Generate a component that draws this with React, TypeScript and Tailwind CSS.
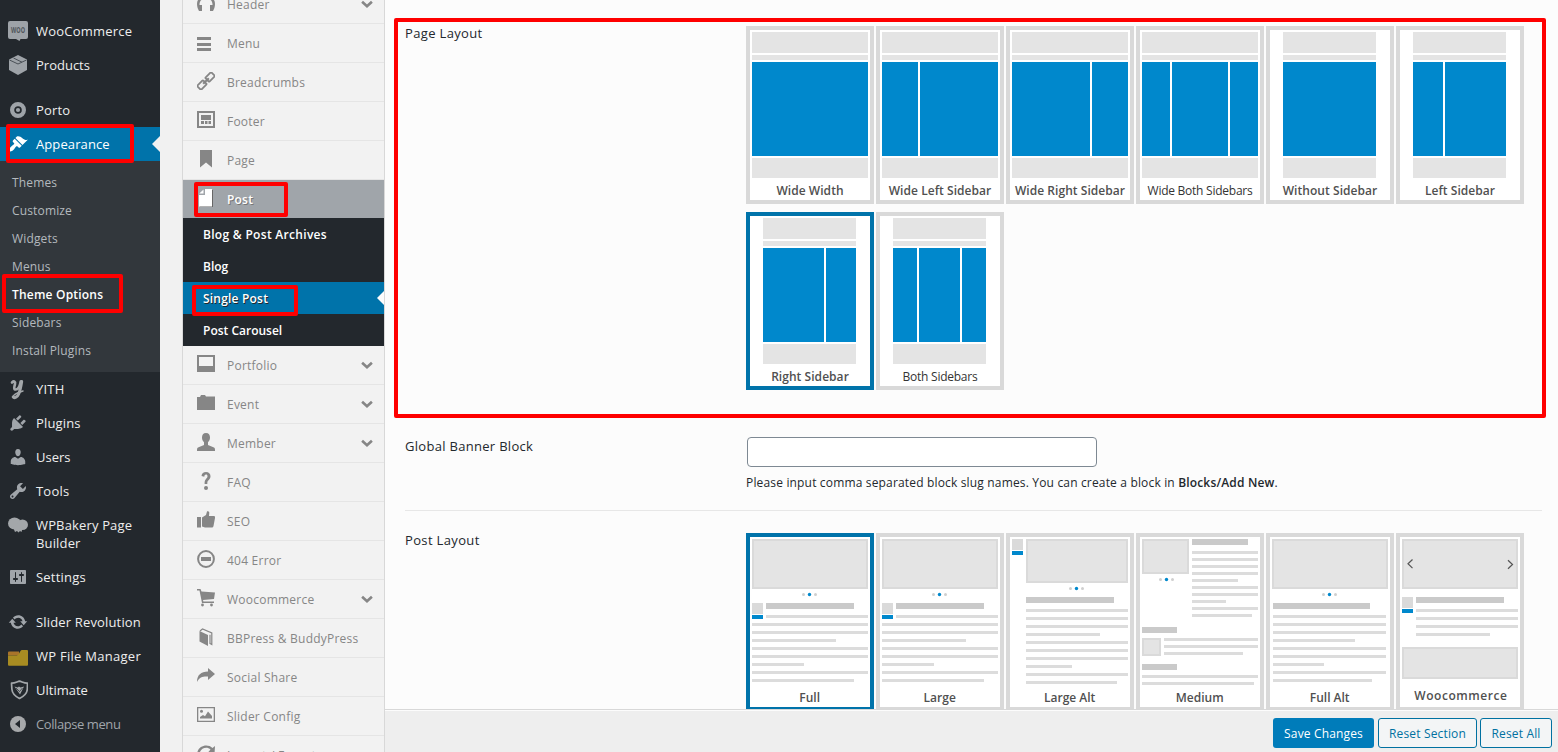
import type { ReactNode } from "react";
import clsx from "clsx";

type MenuItem = {
  label: string;
  icon: ReactNode;
  current?: boolean;
  tall?: boolean;
  gap?: boolean;
  muted?: boolean;
  tracking?: string;
};

type SectionItem = {
  label: string;
  icon: ReactNode;
  arrow?: boolean;
};

// [x, y, width, height]
type Box = [number, number, number, number];

type PostThumb = {
  label: string;
  labelX?: number;
  labelY?: number;
  labelClass?: string;
  images: Box[];
  titles: Box[];
  lines: [number, number, number][];
  avatar?: [number, number];
  dots?: [number, number];
  arrows?: boolean;
  selected?: boolean;
};

const Dash = ({ d }: { d: string }) => (
  <svg width="20" height="20" viewBox="0 0 20 20" fill="currentColor"><path fillRule="evenodd" d={d} /></svg>
);

const El = ({ children }: { children: ReactNode }) => (
  <svg width="18" height="18" viewBox="0 0 18 18" fill="currentColor">{children}</svg>
);

const WooIcon = () => (
  <svg width="20" height="20" viewBox="0 0 20 20">
    <path fill="#9ea3a8" d="M2 0h16a2 2 0 0 1 2 2v14a2 2 0 0 1-2 2h-5.500l-1 2-3.500-2H2a2 2 0 0 1-2-2V2a2 2 0 0 1 2-2z" />
    <text x="10" y="12" textAnchor="middle" fontSize="8" fontWeight="700" fill="#50565c" fontFamily="Open Sans, sans-serif" textLength="14" lengthAdjust="spacingAndGlyphs">WOO</text>
  </svg>
);

const ProductIcon = () => (
  <svg width="20" height="20" viewBox="0 0 20 20">
    <path fill="#9ea3a8" d="M10 0l9 4.500v10.500l-9 5-9-5V4.500z" />
    <path fill="none" stroke="#4a5056" strokeWidth="1" d="M1.500 5l8.500 4 8.500-4M5.500 3l8.500 4.200" />
  </svg>
);

const PortoIcon = () => (
  <svg width="20" height="20" viewBox="0 0 20 20">
    <circle cx="10" cy="10" r="5.900" fill="none" stroke="#9ea3a8" strokeWidth="4.200" />
    <circle cx="10" cy="10" r="2.100" fill="#9ea3a8" />
  </svg>
);

const YithIcon = () => (
  <svg width="20" height="22" viewBox="0 0 20 22" fill="none" stroke="#a3a7aa" strokeLinecap="round">
    <path strokeWidth="2.600" d="M4 3.500c2-2 3.700-1 3 1.500-.8 3-1.500 5.500.8 5.500 2.500 0 4.200-4 4.900-8" />
    <path strokeWidth="3" d="M13.700 2.500c-.8 5-1.500 9-3 12.500-1.200 3-4.500 4.500-5.500 3" />
    <path strokeWidth="1.500" d="M5 18c0-2.500 5-4.500 10-6" />
  </svg>
);

const BakeryIcon = () => (
  <svg width="20" height="20" viewBox="0 0 20 20" fill="#a3a7aa">
    <ellipse cx="6.500" cy="8.500" rx="6.500" ry="6" />
    <ellipse cx="14.500" cy="9.800" rx="5.500" ry="5.200" />
    <path d="M5 12h10l-1.500 5-1.500-1-1.500 1.500-1.500-1.500-2 1z" />
  </svg>
);

const FolderIcon = () => (
  <svg width="20" height="20" viewBox="0 0 20 20">
    <path fill="#a9742a" d="M1 5.500h10v4H0v-3a1 1 0 0 1 1-1z" />
    <path fill="#a88c22" d="M0 9.500h8c1.500 0 2-.5 3-2l1.500-2.500c.5-.7 1-1 2-1H19a1 1 0 0 1 1 1v13.700a1 1 0 0 1-1 1H1a1 1 0 0 1-1-1z" />
  </svg>
);

const ShieldIcon = () => (
  <svg width="20" height="20" viewBox="0 0 20 20">
    <path fill="none" stroke="#a3a7aa" strokeWidth="1.700" strokeLinejoin="round" d="M4 3.200c3 .3 6-1.700 8-2 2 .3 5 2.300 8 2l-.2 6c-.3 4.500-4 7.300-7.800 9.300-3.800-2-7.300-4.800-7.600-9.300z" transform="translate(-.5 0)" />
    <path fill="#a3a7aa" d="M6.500 6.500l3 1 1.500-1 1.500 1 3.500-1-4 8z" />
    <path stroke="#23282d" fill="none" strokeWidth=".7" d="M8 8l3.500 3.500 3-3.500" />
  </svg>
);

const CollapseIcon = () => (
  <svg width="20" height="20" viewBox="0 0 20 20">
    <circle cx="10" cy="10" r="8" fill="#a7a9ab" />
    <path fill="#23282d" d="M12 6v8l-5-4z" />
  </svg>
);

const appearancePath = "M14.48 11.06L7.41 3.99l1.5-1.5c.5-.56 2.3-.47 3.51.32 1.21.8 1.43 1.28 2.91 2.1 1.18.64 2.45 1.26 4.45.85zm-.71.71L6.7 4.7 4.93 6.47c-.39.39-.39 1.02 0 1.41l1.06 1.06c.39.39.39 1.03 0 1.42-.6.6-1.43 1.11-2.21 1.69-.35.26-.7.53-1.01.84C1.43 14.23.4 16.08 1.4 17.07c.99 1 2.84-.03 4.18-1.36.31-.31.58-.66.85-1.02.57-.78 1.08-1.61 1.69-2.21.39-.39 1.02-.39 1.41 0l1.06 1.06c.39.39 1.02.39 1.41 0z";
const pluginsPath = "M13.11 4.36L9.87 7.6 8 5.73l3.24-3.24c.35-.34 1.05-.2 1.56.32.52.51.66 1.21.31 1.55zm-8 1.77l.91-1.12 9.01 9.01-1.19.84c-.71.71-2.63 1.16-3.82 1.16H6.14L4.9 17.26c-.59.59-1.54.59-2.12 0-.59-.58-.59-1.53 0-2.12l1.24-1.24v-3.88c0-1.13.4-3.19 1.09-3.89zm7.26 3.97l3.24-3.24c.34-.35 1.04-.21 1.55.31.52.51.66 1.21.31 1.55l-3.24 3.25z";
const usersPath = "M10 9.25c-2.27 0-2.73-3.44-2.73-3.44C7 4.02 7.82 2 9.97 2c2.16 0 2.98 2.02 2.71 3.81 0 0-.41 3.44-2.68 3.44zm0 2.57L12.72 10c2.39 0 4.52 2.33 4.52 4.53v2.49s-3.65 1.13-7.24 1.13c-3.65 0-7.24-1.13-7.24-1.13v-2.49c0-2.25 1.94-4.48 4.47-4.48z";
const toolsPath = "M16.68 9.77c-1.34 1.34-3.3 1.67-4.95.99l-5.41 6.52c-.99.99-2.59.99-3.58 0s-.99-2.59 0-3.57l6.52-5.42c-.68-1.65-.35-3.61.99-4.95 1.28-1.28 3.12-1.62 4.72-1.06l-2.89 2.89 2.82 2.82 2.86-2.87c.53 1.58.18 3.39-1.08 4.65zM3.81 16.21c.4.39 1.04.39 1.43 0 .4-.4.4-1.04 0-1.43-.39-.4-1.03-.4-1.43 0-.39.39-.39 1.03 0 1.43z";
const settingsPath = "M18 16V4c0-.55-.45-1-1-1H3c-.55 0-1 .45-1 1v12c0 .55.45 1 1 1h14c.55 0 1-.45 1-1zM8 11h1c.55 0 1 .45 1 1s-.45 1-1 1H8v1.5c0 .28-.22.5-.5.5s-.5-.22-.5-.5V13H6c-.55 0-1-.45-1-1s.45-1 1-1h1V5.500c0-.28.22-.5.5-.5s.5.22.5.5V11zm5-2h-1c-.55 0-1-.45-1-1s.45-1 1-1h1V5.500c0-.28.22-.5.5-.5s.5.22.5.5V7h1c.55 0 1 .45 1 1s-.45 1-1 1h-1v5.500c0 .28-.22.5-.5.5s-.5-.22-.5-.5V9z";
const updatePath = "M10.2 3.28c3.53 0 6.43 2.61 6.92 6h2.08l-3.5 4-3.5-4h2.32c-.45-1.97-2.21-3.45-4.32-3.45-1.45 0-2.73.71-3.54 1.78L4.95 5.66C6.23 4.2 8.11 3.28 10.2 3.28zm-.4 13.44c-3.52 0-6.43-2.61-6.92-6H.8l3.5-4c1.17 1.33 2.33 2.67 3.5 4H5.480c.45 1.97 2.21 3.45 4.32 3.45 1.45 0 2.73-.71 3.54-1.78l1.71 1.95c-1.28 1.46-3.15 2.38-5.25 2.38z";

const topMenu: MenuItem[] = [
  { label: "WooCommerce", icon: <WooIcon />, tracking: "tracking-[0.22px]" },
  { label: "Products", icon: <ProductIcon /> },
  { label: "Porto", icon: <PortoIcon />, gap: true, tracking: "tracking-[0.15px]" },
  { label: "Appearance", icon: <Dash d={appearancePath} />, current: true, tracking: "tracking-[0.1px]" },
];

const subMenu = ["Themes", "Customize", "Widgets", "Menus", "Theme Options", "Sidebars", "Install Plugins"];

const bottomMenu: MenuItem[] = [
  { label: "YITH", icon: <YithIcon />, tracking: "tracking-[0.2px]" },
  { label: "Plugins", icon: <Dash d={pluginsPath} />, tracking: "tracking-[0.15px]" },
  { label: "Users", icon: <Dash d={usersPath} /> },
  { label: "Tools", icon: <Dash d={toolsPath} />, tracking: "tracking-[0.2px]" },
  { label: "WPBakery Page Builder", icon: <BakeryIcon />, tall: true, tracking: "tracking-[0.15px]" },
  { label: "Settings", icon: <Dash d={settingsPath} />, tracking: "tracking-[0.2px]" },
  { label: "Slider Revolution", icon: <Dash d={updatePath} />, gap: true, tracking: "tracking-[0.16px]" },
  { label: "WP File Manager", icon: <FolderIcon />, tracking: "tracking-[0.27px]" },
  { label: "Ultimate", icon: <ShieldIcon /> },
  { label: "Collapse menu", icon: <CollapseIcon />, muted: true, tracking: "tracking-[-0.42px]" },
];

const sectionsBefore: SectionItem[] = [
  { label: "Header", arrow: true, icon: <El><path d="M0 10C0-1 18-1 18 10c0 3-1 5-2 7h-3V11h2.500C16 2 2 2 2.500 11H5v6H2c-1-2-2-4-2-7z" /></El> },
  { label: "Menu", icon: <El><path d="M0 4h14v3H0zM0 10h14v3H0zM0 15h14v3H0z" /></El> },
  { label: "Breadcrumbs", icon: <El><g transform="rotate(-45 9 9)" fill="none" stroke="currentColor" strokeWidth="1.800"><rect x="-.9" y="6.200" width="8.300" height="5.600" rx=".8" /><rect x="10.600" y="6.200" width="8.300" height="5.600" rx=".8" /><path strokeWidth="2.200" d="M5 9h8" /></g></El> },
  { label: "Footer", icon: <El><path fillRule="evenodd" d="M0 0h18v17H0zM2 2v13h14V2z" /><path d="M4 4h10v5H4zM4 10h3v3H4zM8 10h2.500v3H8zM11.500 10H14v3h-2.500z" /></El> },
  { label: "Page", icon: <El><path d="M3 0h12v17.500l-6-5-6 5z" /></El> },
];

const sectionsAfter: SectionItem[] = [
  { label: "Portfolio", arrow: true, icon: <El><path fillRule="evenodd" d="M0 0h18v17H0zM2 2v9h14V2z" /></El> },
  { label: "Event", arrow: true, icon: <El><path d="M0 3h3l1-2h4l1 1.500h9V16H0z" /></El> },
  { label: "Member", arrow: true, icon: <El><path d="M9 0c2.800 0 4 2 4 4.500 0 2-.8 3.500-2 4.700V12l6 2.500c1 .5 1 1.500 1 3.500H0c0-2 0-3 1-3.500L7 12V9.200C5.800 8 5 6.500 5 4.500 5 2 6.200 0 9 0z" /></El> },
  { label: "FAQ", icon: <El><path d="M4.500 4C4.700 1.500 6.500 0 9 0c2.800 0 4.500 1.700 4.500 4.200 0 2.200-1.200 3.300-2.200 4.300-.8.800-1 1.500-1 3.500H7.600c0-2.500.2-3.600 1.400-5 .8-1 1.500-1.500 1.500-2.800 0-1-.6-1.700-1.500-1.700-1.100 0-1.500.7-1.700 2.200z" /><circle cx="9" cy="16" r="2" /></El> },
  { label: "SEO", icon: <El><path d="M0 6h4v10.500H0zM5 6.500L9 4l1-3.500C10.500 0 12 .5 12.300 1.500L12 5h5c1 0 1.200 1 1 2l-1.500 8c-.3 1-.8 1.500-2 1.500H8L5 15.500z" /></El> },
  { label: "404 Error", icon: <El><circle cx="9" cy="9" r="7.900" fill="none" stroke="currentColor" strokeWidth="2" /><path d="M4 7h10v4H4z" /></El> },
  { label: "Woocommerce", arrow: true, icon: <El><path d="M0 0h3.500l1 2.500L18 3.500 17 10l-11 1 .4 1.500H17V14H5L2.500 1.500H0z" /><circle cx="5.500" cy="16" r="1.400" /><circle cx="14.500" cy="16" r="1.400" /></El> },
  { label: "BBPress & BuddyPress", icon: <El><path d="M2.500 3l8.500 4v11l-8.500-4.500z" /><path fill="none" stroke="currentColor" strokeWidth="1.200" d="M3 3l2.500-2L14.800 5v11.500L13 15.500M13 16V6.800" /></El> },
  { label: "Social Share", icon: <El><path d="M0 15C0 8 4 4.500 11 4.500V1l7 6-7 6V9.500C6 9.200 2.500 10 0 15z" /></El> },
  { label: "Slider Config", icon: <El><path fillRule="evenodd" d="M0 1h18v15H0zM1.300 2.300v12.400h15.400V2.300z" /><circle cx="4.500" cy="5.200" r="1.500" /><path d="M3 12.500V11l3-2 2 1.200L11 5.500l4 4.500v2.500z" /></El> },
  { label: "Import / Export", icon: <El><path d="M17.500 9L18 1l-2.500 2C11-1.500 1 0 0 9c0 5 4 9 9 9v-2.500C5 15.500 2.500 12.500 2.500 9c.5-6 7.500-8 11-4.500L11 7.500z" /></El> },
];

const pageLayouts = [
  { label: "Wide Width", wide: true, cols: [116] },
  { label: "Wide Left Sidebar", wide: true, cols: [36, 78] },
  { label: "Wide Right Sidebar", wide: true, cols: [78, 36] },
  { label: "Wide Both Sidebars", wide: true, cols: [28, 56, 28], light: true },
  { label: "Without Sidebar", cols: [93] },
  { label: "Left Sidebar", cols: [30, 61] },
  { label: "Right Sidebar", cols: [61, 30], selected: true },
  { label: "Both Sidebars", cols: [24, 41, 24], light: true },
];

const fullLines: [number, number, number][] = [
  [16, 78, 102], [2, 86, 116], [2, 94, 116], [2, 102, 84], [2, 110, 116],
  [2, 118, 116], [2, 126, 52], [2, 134, 116], [2, 142, 102],
];

const postLayouts: PostThumb[] = [
  { label: "Full", selected: true, images: [[2, 2, 116, 50]], dots: [59.5, 57.5], avatar: [2, 66], titles: [[16, 66, 88, 6]], lines: fullLines },
  { label: "Large", images: [[2, 2, 116, 50]], dots: [59.5, 57.5], avatar: [2, 66], titles: [[16, 66, 88, 6]], lines: fullLines },
  {
    label: "Large Alt", images: [[16, 2, 102, 44]], dots: [66.5, 51.5], avatar: [2, 2], titles: [[16, 60, 88, 6]],
    lines: [[16, 72, 102], [16, 80, 102], [16, 88, 102], [16, 96, 74], [16, 104, 102], [16, 112, 102], [16, 120, 102], [16, 128, 46], [16, 136, 102], [16, 144, 91]],
  },
  {
    label: "Medium", images: [[2, 2, 47, 35], [2, 101, 19, 18]], dots: [26.5, 42.5],
    titles: [[52, 2, 56, 6], [2, 90, 35, 6], [2, 127, 35, 6]],
    lines: [[52, 14, 66], [52, 21, 66], [52, 28, 66], [52, 35, 66], [52, 42, 46], [52, 49, 66], [52, 56, 66], [52, 63, 34], [52, 70, 66], [52, 77, 60], [24, 101, 94], [24, 108, 94], [24, 115, 79], [2, 138, 116], [2, 145, 112]],
  },
  {
    label: "Full Alt", images: [[2, 2, 116, 50]], dots: [59.5, 57.5], titles: [[3, 66, 97, 6]],
    lines: [[3, 78, 113], [3, 86, 113], [3, 94, 113], [3, 102, 82], [3, 110, 113], [3, 118, 113], [3, 126, 51], [3, 134, 113], [3, 142, 99]],
  },
  {
    label: "Woocommerce", labelX: 60.9, labelY: 163, labelClass: "tracking-[0.55px]", arrows: true,
    images: [[2, 2, 116, 50], [2, 110, 116, 32]], avatar: [2, 60], titles: [[16, 60, 88, 6]],
    lines: [[16, 72, 102], [16, 80, 102], [16, 88, 102], [16, 96, 74]],
  },
];

function AdminItem({ item }: { item: MenuItem }) {
  return (
    <li
      className={clsx(
        "relative flex pl-2 pt-[7px]",
        item.tall ? "h-[52px]" : "h-[34px]",
        item.gap && "mt-[11px]",
        item.current ? "bg-[#0073aa] text-white" : item.muted ? "text-[#a0a5aa]" : "text-[#eee]",
      )}
    >
      <span className={clsx("w-5 shrink-0", !item.current && "text-[#a0a5aa]")}>{item.icon}</span>
      <span className={clsx("ml-2 w-[112px] pt-px leading-[18px]", item.tracking)}>{item.label}</span>
      {item.current && (
        <svg className="absolute right-0 top-[9px]" width="8" height="16" viewBox="0 0 8 16"><path fill="#f1f1f1" d="M8 0v16L0 8z" /></svg>
      )}
    </li>
  );
}

function SectionRow({ item }: { item: SectionItem }) {
  return (
    <li className="flex h-[39px] shrink-0 border-b border-[#e5e5e5] pl-3.5 pr-[11px] pt-[9px] text-[#868686]">
      <span className="h-[18px] w-[18px]">{item.icon}</span>
      <span className="ml-3 whitespace-nowrap leading-[21px] tracking-[0.23px]">{item.label}</span>
      {item.arrow && (
        <svg className="ml-auto mt-[6px]" width="12" height="9" viewBox="0 0 12 9"><path fill="none" stroke="currentColor" strokeWidth="2.600" d="M1.100 1.700L6 6.300l4.900-4.600" /></svg>
      )}
    </li>
  );
}

function PageThumb({ layout }: { layout: (typeof pageLayouts)[number] }) {
  const { label, wide, cols, light, selected } = layout;
  return (
    <div className={clsx("h-[178px] w-[128px] border-4 bg-white pt-0.5", selected ? "border-[#0073aa]" : "border-[#d9d9d9]")}>
      <div className={clsx("flex flex-col gap-0.5", wide ? "mx-0.5" : "ml-[13px] w-[93px]")}>
        <div className="h-[21px] bg-[#e4e4e4]" />
        <div className="h-[5px] bg-[#e4e4e4]" />
        <div className="flex h-[94px] gap-0.5">
          {cols.map((w, i) => <div key={i} className="bg-[#0088cc]" style={{ width: w }} />)}
        </div>
        <div className="h-5 bg-[#e4e4e4]" />
      </div>
      <p className={clsx("mt-1 whitespace-nowrap text-center text-[12px] leading-[18px]", light ? "tracking-[-0.25px] font-medium text-[#333]" : "font-semibold tracking-[0.05px] text-[#505050]")}>{label}</p>
    </div>
  );
}

function PostThumbCard({ thumb }: { thumb: PostThumb }) {
  const { avatar, dots } = thumb;
  return (
    <div className={clsx("h-[178px] w-[128px] border-4 bg-white", thumb.selected ? "border-[#0073aa]" : "border-[#d9d9d9]")}>
      <svg width="120" height="170" viewBox="0 0 120 170">
        {thumb.images.map(([x, y, w, h], i) => (
          <rect key={i} x={x + 1} y={y + 1} width={w - 2} height={h - 2} fill="#e4e4e4" stroke="#dadada" strokeWidth="2" />
        ))}
        {thumb.titles.map(([x, y, w, h], i) => <rect key={i} x={x} y={y} width={w} height={h} fill="#cacaca" />)}
        {thumb.lines.map(([x, y, w], i) => <rect key={i} x={x} y={y} width={w} height="3" fill="#dcdcdc" />)}
        {avatar && (
          <>
            <rect x={avatar[0]} y={avatar[1]} width="11" height="11" fill="#dadada" />
            <rect x={avatar[0]} y={avatar[1] + 12} width="11" height="4" fill="#0088cc" />
          </>
        )}
        {dots && (
          <>
            <circle cx={dots[0] - 6} cy={dots[1]} r="1.500" fill="#cfcfcf" />
            <circle cx={dots[0]} cy={dots[1]} r="1.700" fill="#0088cc" />
            <circle cx={dots[0] + 6} cy={dots[1]} r="1.500" fill="#cfcfcf" />
          </>
        )}
        {thumb.arrows && <path fill="none" stroke="#555" strokeWidth="1.200" d="M12.500 22.500l-4.500 4.300 4.500 4.300M108 23.200l4.500 4.300-4.500 4.300" />}
        <text x={thumb.labelX ?? 59.7} y={thumb.labelY ?? 164.5} textAnchor="middle" fontSize="12" fontWeight="600" fill="#505050" className={thumb.labelClass}>{thumb.label}</text>
      </svg>
    </div>
  );
}

// red highlight drawn over the page
const Mark = ({ className }: { className: string }) => (
  <div className={clsx("pointer-events-none absolute rounded-[2px] border-4 border-[#f00]", className)} />
);

export default function App() {
  return (
    <div className="relative flex h-[752px] w-[1558px] overflow-hidden bg-[#f1f1f1] font-['Open_Sans','Noto_Sans',sans-serif] text-[13px]">
      <nav className="w-40 shrink-0 bg-[#23282d] pt-3.5">
        <ul>{topMenu.map((item) => <AdminItem key={item.label} item={item} />)}</ul>
        <ul className="h-[211px] bg-[#32373c] pt-2 text-[12px] tracking-[0.15px] text-[#b4b9be]">
          {subMenu.map((label) => (
            <li key={label} className={clsx("h-7 pl-3 leading-7", label === "Theme Options" && "font-semibold tracking-[0.2px] text-white")}>{label}</li>
          ))}
        </ul>
        <ul>{bottomMenu.map((item) => <AdminItem key={item.label} item={item} />)}</ul>
      </nav>

      <aside className="ml-[22px] flex w-[203px] shrink-0 flex-col overflow-hidden border-x border-[#d8d8d8] bg-[#f2f2f2] text-[12px] font-medium">
        <ul className="-mt-[15px] flex flex-col">
          {sectionsBefore.map((item) => <SectionRow key={item.label} item={item} />)}
        </ul>
        <div className="flex h-[38px] shrink-0 bg-[#a0a5aa] pl-3.5 pt-[9px] font-semibold text-white [text-shadow:1px_1px_#777]">
          <svg width="18" height="18" viewBox="0 0 18 18"><path fill="#666" d="M3 17h12V1h1v17.500H3z" /><path fill="#fff" d="M8 0h7v17.500H2V6h6z" /><path fill="#fff" d="M6.500.500V4.500H2.300z" /></svg>
          <span className="ml-3 leading-[21px] tracking-[0.2px]">Post</span>
        </div>
        <ul className="shrink-0 bg-[#23282d] font-semibold text-white">
          {["Blog & Post Archives", "Blog", "Single Post", "Post Carousel"].map((label) => (
            <li
              key={label}
              className={clsx(
                "relative h-8 pl-5 pt-px leading-8",
                label === "Single Post" && "bg-[#0073aa] tracking-[0.2px] [text-shadow:1px_1px_#23282d]",
                label === "Blog & Post Archives" && "tracking-[0.3px]",
              )}
            >
              {label}
              {label === "Single Post" && (
                <svg className="absolute right-0 top-[9px]" width="7" height="14" viewBox="0 0 7 14"><path fill="#fcfcfc" d="M7 0v14L0 7z" /></svg>
              )}
            </li>
          ))}
        </ul>
        <ul className="flex flex-col">
          {sectionsAfter.map((item) => <SectionRow key={item.label} item={item} />)}
        </ul>
      </aside>

      <main className="flex min-w-0 flex-1 flex-col bg-[#fcfcfc] text-[#23282d]">
        <div className="h-[709px] overflow-hidden pl-5 pt-[26px]">
          <section className="flex h-[411px]">
            <h3 className="w-[341px] shrink-0 font-medium leading-[15px] tracking-[0.35px]">Page Layout</h3>
            <div className="flex w-[790px] flex-wrap content-start gap-x-0.5 gap-y-2">
              {pageLayouts.map((layout) => <PageThumb key={layout.label} layout={layout} />)}
            </div>
          </section>

          <section className="mr-4 flex h-[74px] border-b border-[#e7e7e7]">
            <h3 className="w-[341px] shrink-0 font-medium leading-[19px] tracking-[0.3px]">Global Banner Block</h3>
            <div>
              <input className="ml-px block h-[30px] w-[350px] rounded border border-[#7e8993] bg-white px-2 outline-none" readOnly />
              <p className="mt-[7px] text-[12px] leading-[18px] tracking-[0.165px]">
                Please input comma separated block slug names. You can create a block in <b className="font-semibold">Blocks/Add New</b>.
              </p>
            </div>
          </section>

          <section className="mt-[22px] flex">
            <h3 className="w-[341px] shrink-0 font-medium leading-[15px] tracking-[0.35px]">Post Layout</h3>
            <div className="flex gap-0.5">
              {postLayouts.map((thumb) => <PostThumbCard key={thumb.label} thumb={thumb} />)}
            </div>
          </section>
        </div>

        <footer className="flex h-[43px] shrink-0 justify-end border-t border-[#d8d8d8] bg-[#eee] pr-1.5 pt-2 text-[12px] tracking-[0.15px] shadow-[inset_0_1px_#fcfcfc]">
          <button className="h-[30px] w-[101px] rounded-[3px] bg-[#007cba] pt-0.5 text-white">Save Changes</button>
          <button className="ml-1 h-[30px] w-[99px] rounded-[3px] border border-[#0071a1] bg-[#f3f5f6] pt-0.5 text-[#0071a1]">Reset Section</button>
          <button className="ml-[3px] h-[30px] w-[72px] rounded-[3px] border border-[#0071a1] bg-[#f3f5f6] pt-0.5 text-[#0071a1]">Reset All</button>
        </footer>
      </main>

      <Mark className="left-[6px] top-[124px] h-[39px] w-[128px]" />
      <Mark className="left-[2px] top-[274px] h-[39px] w-[121px]" />
      <Mark className="left-[194px] top-[182px] h-[35px] w-[94px]" />
      <Mark className="left-[192px] top-[285px] h-[31px] w-[106px]" />
      <Mark className="left-[394px] top-[18px] h-[400px] w-[1152px]" />
    </div>
  );
}
